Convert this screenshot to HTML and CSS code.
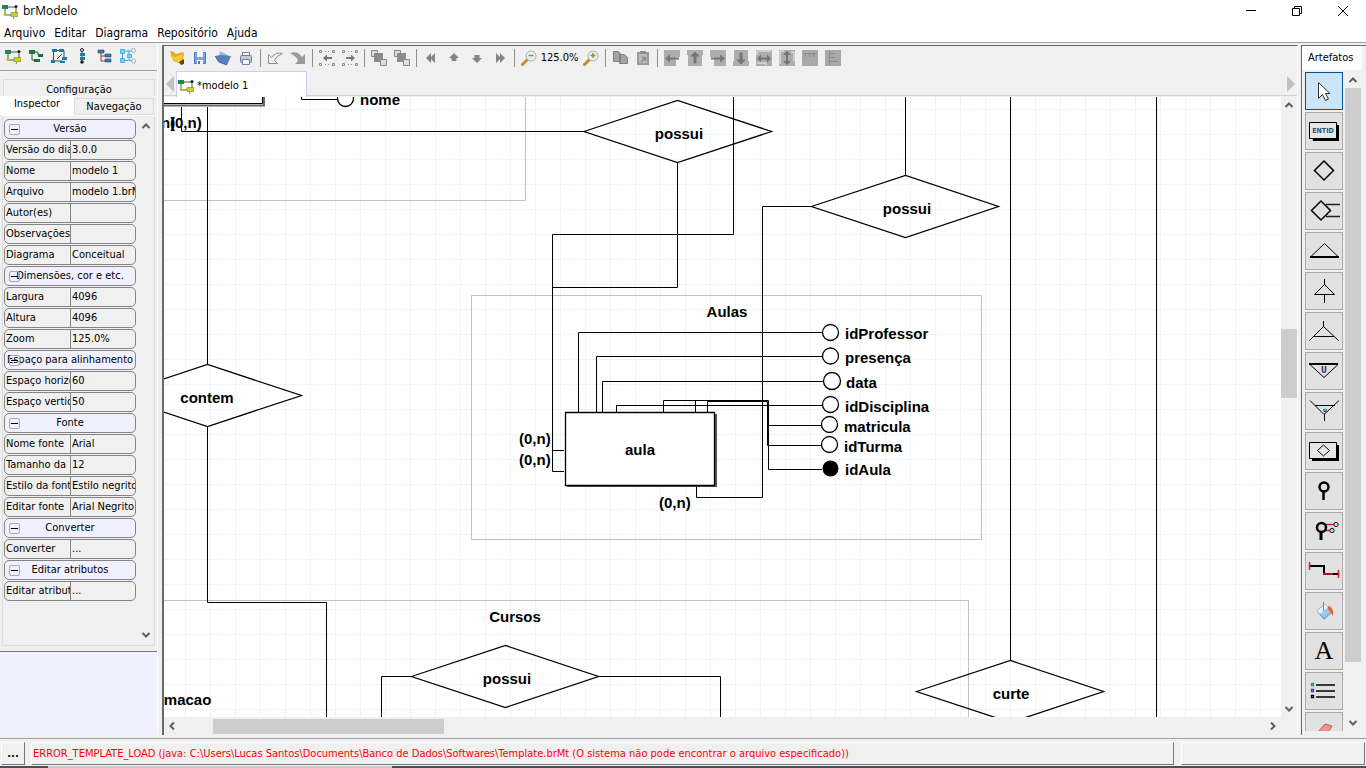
FILE: index.html
```html
<!DOCTYPE html>
<html lang="pt-BR">
<head>
<meta charset="utf-8">
<title>brModelo</title>
<link rel="stylesheet" href="styles.css">
</head>
<body>
<svg class="defs" aria-hidden="true">
  <symbol id="logo" viewBox="0 0 16 16"><path d="M4 4h10v8M3 5v7h9" fill="none" stroke="#555"/><path d="M0 2h6v4H0z" fill="#1c8a4c"/><circle cx="14" cy="3.500" r="1.500" fill="#222"/><circle cx="3" cy="11.500" r="1.500" fill="#b5c800"/><path d="M9 9.500h7v4H9z" fill="#c3d51a" stroke="#7e8c1a" stroke-width=".6"/><path d="M12 14l-1 2" stroke="#777"/></symbol>
  <symbol id="up" viewBox="0 0 16 16"><path d="M4.500 10L8 6.500 11.500 10" fill="none" stroke="#606060" stroke-width="2"/></symbol>
  <symbol id="down" viewBox="0 0 16 16"><path d="M4.500 6L8 9.500 11.500 6" fill="none" stroke="#606060" stroke-width="2"/></symbol>
  <symbol id="left" viewBox="0 0 16 16"><path d="M10 4.500L6.500 8 10 11.500" fill="none" stroke="#606060" stroke-width="2"/></symbol>
  <symbol id="right" viewBox="0 0 16 16"><path d="M6 4.500L9.500 8 6 11.500" fill="none" stroke="#606060" stroke-width="2"/></symbol>
  <symbol id="lens" viewBox="0 0 16 16"><path d="M6.500 9.500L1.500 14.500" stroke="#c98a2b" stroke-width="3" stroke-linecap="round"/><circle cx="10" cy="6" r="5" fill="#e4f2f4" stroke="#a3b4b0"/><path d="M7.500 5.500h5" stroke="#a58a20" stroke-width="1.500"/></symbol>
  <symbol id="nodes" viewBox="0 0 16 16"><g fill="none" stroke="#8a8a8a"><path d="M.5.500h2v2h-2zM13.500.500h2v2h-2zM.5 13.500h2v2h-2zM13.500 13.500h2v2h-2zM6 1.500h1M9 1.500h1M6 14.500h1M9 14.500h1"/></g></symbol>
  <symbol id="stack" viewBox="0 0 16 16"><path d="M.5.500h6v6h-6z" fill="#ddd" stroke="#888"/><path d="M3 3h9v9H3z" fill="#8c8c8c"/><path d="M9.500 9.500h6v6h-6z" fill="#ddd" stroke="#888"/></symbol>
</svg>

<header class="titlebar">
  <svg class="app-icon"><use href="#logo"/></svg>
  <h1 class="app-name">brModelo</h1>
  <button class="win" aria-label="Minimizar"><svg viewBox="0 0 12 12"><path d="M1 5.500h10" stroke="#000"/></svg></button>
  <button class="win" aria-label="Restaurar"><svg viewBox="0 0 12 12"><path d="M1.500 3.500h7v7h-7zM3.500 3V1.500h7v7H9" fill="none" stroke="#000"/></svg></button>
  <button class="win" aria-label="Fechar"><svg viewBox="0 0 12 12"><path d="M1 1l10 10M11 1L1 11" stroke="#000"/></svg></button>
</header>
<nav class="menubar">
  <button>Arquivo</button><button>Editar</button><button>Diagrama</button><button>Repositório</button><button>Ajuda</button>
</nav>

<main class="workspace">
  <aside class="side">
    <div class="models">
      <button class="tool" aria-label="Conceitual"><svg><use href="#logo"/></svg></button>
      <button class="tool" aria-label="Lógico"><svg viewBox="0 0 16 16"><path d="M5 4h5v3h3M4 5v7h4" fill="none" stroke="#444"/><path d="M1 2h6v4H1zM10 6h5v3h-5zM6 11h6v3H6z" fill="#147a3c"/></svg></button>
      <button class="tool" aria-label="Fluxo"><svg viewBox="0 0 16 16"><path d="M3 2.500h10v7M2.500 3v10h9M6 11l5-5" fill="none" stroke="#444"/><path d="M1 1h5v3H1zM8 1h5v3H8zM11 9h5v3h-5zM0 12h4v3H0zM9 13h5v2H9z" fill="#1d7da8"/></svg></button>
      <button class="tool" aria-label="Atividade"><svg viewBox="0 0 16 16"><path d="M8 3v11" stroke="#444"/><circle cx="8" cy="2" r="1.500" fill="#fff" stroke="#111"/><path d="M6 5h5v3H6zM6 9h5v3H6z" fill="#1d7da8"/><circle cx="8" cy="14" r="1.800" fill="#222"/></svg></button>
      <button class="tool" aria-label="EAP"><svg viewBox="0 0 16 16"><path d="M4 4v9h4M4 8h4" fill="none" stroke="#a33"/><path d="M1 2h6v3H1zM8 6h6v3H8zM8 11h6v3H8z" fill="#2a84ad" stroke="#345" stroke-width=".6"/></svg></button>
      <button class="tool" aria-label="Livre"><svg viewBox="0 0 16 16"><path d="M4 3h5v9.500h3M4 12.500h4M9 3h3M2.500 5v6" fill="none" stroke="#39a1d6"/><path d="M.5 1.500h4v4h-4zM.5 10.500h4v4h-4zM7.500 6.500h4v3h-4z" fill="#7fd0f2" stroke="#49b2e0"/><circle cx="13.500" cy="2.500" r="2" fill="#fff" stroke="#9ab"/><circle cx="13.500" cy="13" r="2" fill="#fff" stroke="#9ab"/></svg></button>
    </div>
    <div class="tabs">
      <button class="tab tab-config">Configuração</button>
      <button class="tab tab-on">Inspector</button>
      <button class="tab tab-nav">Navegação</button>
    </div>
    <div class="inspector">
      <form class="props">
        <button type="button" class="group"><i></i>Versão</button>
        <div class="prop"><label for="p1">Versão do diagrama</label><input id="p1" value="3.0.0"></div>
        <div class="prop"><label for="p2">Nome</label><input id="p2" value="modelo 1"></div>
        <div class="prop"><label for="p3">Arquivo</label><input id="p3" value="modelo 1.brM3"></div>
        <div class="prop"><label for="p4">Autor(es)</label><input id="p4"></div>
        <div class="prop"><label for="p5">Observações</label><input id="p5"></div>
        <div class="prop"><label for="p6">Diagrama</label><input id="p6" value="Conceitual"></div>
        <button type="button" class="group"><i></i>Dimensões, cor e etc.</button>
        <div class="prop"><label for="p7">Largura</label><input id="p7" value="4096"></div>
        <div class="prop"><label for="p8">Altura</label><input id="p8" value="4096"></div>
        <div class="prop"><label for="p9">Zoom</label><input id="p9" value="125.0%"></div>
        <button type="button" class="group"><i></i>Espaço para alinhamento</button>
        <div class="prop"><label for="p10">Espaço horizontal</label><input id="p10" value="60"></div>
        <div class="prop"><label for="p11">Espaço vertical</label><input id="p11" value="50"></div>
        <button type="button" class="group"><i></i>Fonte</button>
        <div class="prop"><label for="p12">Nome fonte</label><input id="p12" value="Arial"></div>
        <div class="prop"><label for="p13">Tamanho da</label><input id="p13" value="12"></div>
        <div class="prop"><label for="p14">Estilo da fonte</label><input id="p14" value="Estilo negrito"></div>
        <div class="prop"><label for="p15">Editar fonte</label><input id="p15" value="Arial Negrito"></div>
        <button type="button" class="group"><i></i>Converter</button>
        <div class="prop"><label for="p16">Converter</label><input id="p16" value="..."></div>
        <button type="button" class="group"><i></i>Editar atributos</button>
        <div class="prop"><label for="p17">Editar atributos</label><input id="p17" value="..."></div>
      </form>
      <div class="scroll scroll-y"><button aria-label="Subir"><svg><use href="#up"/></svg></button><span class="grow"></span><button aria-label="Descer"><svg><use href="#down"/></svg></button></div>
    </div>
    <div class="hint"></div>
  </aside>

  <section class="editor">
    <div class="toolbar">
      <button class="tool" aria-label="Abrir"><svg viewBox="0 0 16 16"><path d="M1 1l4 1 2 2 7-2 1 2-2 10-9-3z" fill="#e9a91f"/><path d="M1 5l5 2 8-3-2 9-8-3z" fill="#f8c941"/><path d="M10 12l5-3v5l-3 1z" fill="#5d4720"/></svg></button>
      <button class="tool" aria-label="Salvar"><svg viewBox="0 0 16 16"><path d="M2.500 2.500h11v11h-11z" fill="#7ba2df" stroke="#4d7ac6"/><path d="M5 2h6v5H5zM5 10h6v4H5z" fill="#f5f8ff"/><path d="M6 11h2v3H6z" fill="#5577b0"/></svg></button>
      <button class="tool" aria-label="Fechar modelo"><svg viewBox="0 0 16 16"><path d="M5 1l8 4-2 8-8-3z" fill="#a8b9cf"/><path d="M0 6l6-1 10 1-4 9-8-3z" fill="#577fb8"/><path d="M0 6l4 6 8 3" fill="none" stroke="#3d659f"/></svg></button>
      <button class="tool" aria-label="Imprimir"><svg viewBox="0 0 16 16"><path d="M4.500 6V2.500h7V6" fill="#f4f7fb" stroke="#7b8591"/><rect x="2.500" y="5.500" width="11" height="7" rx="1" fill="#c2cad5" stroke="#727b88"/><path d="M4.500 9.500h7v5h-7z" fill="#f5f8fc" stroke="#6b83b0"/></svg></button>
      <span class="sep"></span>
      <button class="tool" aria-label="Desfazer"><svg viewBox="0 0 16 16"><path d="M1.500 4.500v9h9L7.500 10.500Q9 6 15.500 3.500 9 1.500 4.500 7.500z" fill="#eee" stroke="#8d8d8d"/></svg></button>
      <button class="tool" aria-label="Refazer"><svg viewBox="0 0 16 16"><path d="M15 4v10H5l3-3Q7 6 0 3.500 7 0 12 7z" fill="#9a9a9a"/></svg></button>
      <span class="sep"></span>
      <button class="tool" aria-label="Anterior"><svg><use href="#nodes"/><path d="M4 8l4-3.500v2.500h5v2H8v2.500z" fill="#777"/></svg></button>
      <button class="tool" aria-label="Próximo"><svg><use href="#nodes"/><path d="M13 8L9 4.500v2.500H4v2h5v2.500z" fill="#777"/></svg></button>
      <span class="sep"></span>
      <button class="tool" aria-label="Para frente"><svg><use href="#stack"/></svg></button>
      <button class="tool" aria-label="Para trás"><svg><use href="#stack"/></svg></button>
      <span class="sep"></span>
      <button class="tool" aria-label="Mover à esquerda"><svg viewBox="0 0 16 16"><path d="M3 8l5-5v10zM7 8l5-5v10z" fill="#858585"/></svg></button>
      <button class="tool" aria-label="Mover acima"><svg viewBox="0 0 16 16"><path d="M8 3l5 5h-2.500v3h-5V8H3z" fill="#858585"/></svg></button>
      <button class="tool" aria-label="Mover abaixo"><svg viewBox="0 0 16 16"><path d="M8 13l5-5h-2.500V5h-5v3H3z" fill="#858585"/></svg></button>
      <button class="tool" aria-label="Mover à direita"><svg viewBox="0 0 16 16"><path d="M9 8L4 3v10zM13 8L8 3v10z" fill="#858585"/></svg></button>
      <span class="sep"></span>
      <button class="tool" aria-label="Reduzir"><svg><use href="#lens"/></svg></button>
      <output class="zoom">125.0%</output>
      <button class="tool" aria-label="Ampliar"><svg><use href="#lens"/><path d="M10 3v5" stroke="#a58a20" stroke-width="1.500"/></svg></button>
      <span class="sep"></span>
      <button class="tool" aria-label="Copiar"><svg viewBox="0 0 16 16"><path d="M1.500 1.500h5l2 2v8h-7zM7.500 4.500h5l3 3v6h-8z" fill="#a4a4a4" stroke="#808080"/></svg></button>
      <button class="tool" aria-label="Colar"><svg viewBox="0 0 16 16"><path d="M3 3h10v11H3z" fill="#bbb" stroke="#9a9a9a" stroke-width="2"/><path d="M5 1h6v3H5z" fill="#8e8e8e"/><path d="M6 12l4-4M7 7.500h3.500V11" fill="none" stroke="#888" stroke-width="1.500"/></svg></button>
      <span class="sep"></span>
      <button class="tool" aria-label="Alinhar à esquerda"><svg viewBox="0 0 16 16"><path d="M0 0h16v7H0zM0 6h12v10H0z" fill="#adadad"/><path d="M1 8.500l5-4v3h9v2H6v3z" fill="#777"/></svg></button>
      <button class="tool" aria-label="Alinhar acima"><svg viewBox="0 0 16 16"><path d="M0 0h16v5H0zM1 5h14v11H1z" fill="#adadad"/><path d="M8 2l4 4H9v7H7V6H4z" fill="#777" stroke="#777"/></svg></button>
      <button class="tool" aria-label="Alinhar à direita"><svg viewBox="0 0 16 16"><path d="M0 0h16v7H0zM4 6h12v10H4z" fill="#adadad"/><path d="M15 8.500l-5-4v3H1v2h9v3z" fill="#777"/></svg></button>
      <button class="tool" aria-label="Alinhar abaixo"><svg viewBox="0 0 16 16"><path d="M1 0h14v11H1zM0 11h16v5H0z" fill="#adadad"/><path d="M8 14l4-4H9V3H7v7H4z" fill="#777" stroke="#777"/></svg></button>
      <button class="tool" aria-label="Mesma largura"><svg viewBox="0 0 16 16"><path d="M0 0h16v16H0z" fill="#adadad"/><path d="M1 5V1h14M1 13h9v2" fill="none" stroke="#eee"/><path d="M1 8.500l4-4v3h6v-3l4 4-4 4v-3H5v3z" fill="#747474"/></svg></button>
      <button class="tool" aria-label="Mesma altura"><svg viewBox="0 0 16 16"><path d="M0 0h16v16H0z" fill="#adadad"/><path d="M1 14V1h4M12 2h3v9" fill="none" stroke="#eee"/><path d="M8 1l4 4H9v6h3l-4 4-4-4h3V5H4z" fill="#747474"/></svg></button>
      <button class="tool" aria-label="Régua horizontal"><svg viewBox="0 0 16 16"><path d="M0 0h16v16H0z" fill="#a8a8a8"/><path d="M1 3.500h14M3.500 4v3M7.500 4v3M11.500 4v3" stroke="#8b8b8b"/></svg></button>
      <button class="tool" aria-label="Régua vertical"><svg viewBox="0 0 16 16"><path d="M0 0h16v16H0z" fill="#a8a8a8"/><path d="M4.500 1v14M5 3.500h5M5 7.500h5M5 11.500h8" stroke="#8b8b8b"/></svg></button>
    </div>
    <div class="docs">
      <button class="doc-nav" aria-label="Anterior"><svg viewBox="0 0 8 16"><path d="M8 0v16L0 8z" fill="#c0c0c0"/></svg></button>
      <button class="doc"><svg><use href="#logo"/></svg>*modelo 1</button>
      <span class="doc-rest"></span>
      <button class="doc-nav" aria-label="Próxima"><svg viewBox="0 0 8 16"><path d="M0 0v16l8-8z" fill="#c0c0c0"/></svg></button>
    </div>
    <div class="stage">
      <svg class="canvas">
        <defs><pattern id="grid" width="25" height="25" patternUnits="userSpaceOnUse" x="210" y="109"><path d="M.5 0v25M0 .5h25" stroke="#edf5fa"/></pattern></defs>
        <g transform="translate(-164 -97)">
          <rect x="164" y="97" width="4096" height="4096" fill="url(#grid)"/>
          <g class="frame"><path d="M525.500 90v110.500H150"/><path d="M471.500 295.500h510v244h-510z"/><path d="M150 600.500h818.500V900"/></g>
          <path d="M150 105.500h114V90" fill="none" stroke="#666" stroke-width="2"/>
          <g class="wire">
            <path d="M150 103.500h112.500V90M181.500 107v24.500H584M207.500 107v257.500M301.500 90v9.500H337"/>
            <path d="M677.500 162.500v125H552.500M733.500 90v144.500H552.500v237H564M552.500 450.500H564"/>
            <path d="M905.500 90v86M811 206.500h-48.500v291h-66V487M1010.500 90v570M1156.500 90v700"/>
            <path d="M207.500 426.500v176h119V790M411 676.500h-29.500V790M599 676.500h121.500V790"/>
            <path d="M578.500 412v-79.500H822M596.500 412v-55.500H822M602.500 412v-30.500H823M616.500 412v-6.500H822"/>
            <path d="M663.500 412v-11.500h105v25H821M695.500 412v-11.500M707.500 412v-10.500h60v44H821M768.500 425v44.500H822"/>
          </g>
          <g class="diamond">
            <path d="M584 131.500L677.500 100.500 771.500 131.500 677.500 162.500z"/>
            <path d="M811.500 206.500L905.500 175.500 998.500 206.500 905.500 237.500z"/>
            <path d="M114 395.500L207.500 364.500 301.500 395.500 207.500 426.500z"/>
            <path d="M411.500 676.500L505.500 645.500 598.500 676.500 505.500 707.500z"/>
            <path d="M916.500 691.500L1010.500 660.500 1103.500 691.500 1010.500 722.500z"/>
          </g>
          <path d="M567 414h150v73H567z" fill="#555"/>
          <path class="shape" d="M565.500 412.500h149v73h-149z"/>
          <g class="shape"><circle cx="345.500" cy="98.500" r="8"/><circle cx="830.500" cy="332.500" r="8"/><circle cx="830.500" cy="356" r="8"/><circle cx="832" cy="381" r="8.500"/><circle cx="830.500" cy="404.500" r="8"/><circle cx="829.500" cy="424.500" r="8"/><circle cx="829.500" cy="444.500" r="8"/></g>
          <circle cx="830.500" cy="468.500" r="8"/>
          <g class="label">
            <text x="360" y="105">nome</text><text x="161" y="128">n)</text><text x="170" y="128">(0,n)</text>
            <text x="845" y="339">idProfessor</text><text x="845" y="363">presença</text><text x="846" y="388">data</text><text x="845" y="412">idDisciplina</text><text x="844" y="432">matricula</text><text x="844" y="452">idTurma</text><text x="845" y="475">idAula</text>
            <text x="519" y="444">(0,n)</text><text x="519" y="465">(0,n)</text><text x="659" y="508">(0,n)</text>
            <text x="158" y="705">rmacao</text>
          </g>
          <g class="label mid">
            <text x="679" y="139">possui</text><text x="907" y="214">possui</text><text x="207" y="403">contem</text><text x="727" y="317">Aulas</text><text x="640" y="455">aula</text><text x="515" y="622">Cursos</text><text x="507" y="684">possui</text><text x="1011" y="699">curte</text>
          </g>
        </g>
      </svg>
      <div class="scroll scroll-y"><button aria-label="Subir"><svg><use href="#up"/></svg></button><span class="stage-before"></span><span class="thumb stage-thumb"></span><span class="stage-after"></span><button aria-label="Descer"><svg><use href="#down"/></svg></button></div>
      <div class="scroll scroll-x"><button aria-label="Esquerda"><svg><use href="#left"/></svg></button><span class="row-before"></span><span class="thumb row-thumb"></span><span class="row-after"></span><button aria-label="Direita"><svg><use href="#right"/></svg></button></div>
    </div>
  </section>

  <aside class="palette">
    <h2 class="palette-title">Artefatos</h2>
    <div class="palette-body">
      <div class="items">
        <button class="item item-on" aria-label="Selecionar"><svg viewBox="0 0 32 32"><path d="M10.500 7.500v16l4-4 3 6 3-1.500-3-5.500h4.500z" fill="#fff" stroke="#333"/></svg></button>
        <button class="item" aria-label="Entidade"><svg viewBox="0 0 32 32"><path d="M3 10h28v16H5z"/><path d="M1.500 7.500h27v16h-27z" fill="#e6e6e6" stroke="#000"/><text class="entid" x="15" y="18">ENTID</text></svg></button>
        <button class="item" aria-label="Relacionamento"><svg viewBox="0 0 32 32"><path d="M16 6l9.500 9.500L16 25l-9.500-9.500z" fill="none" stroke="#000" stroke-width="1.500"/></svg></button>
        <button class="item" aria-label="Entidade associativa"><svg viewBox="0 0 32 32"><path d="M13 6l9.500 9.500L13 25l-9.500-9.500z" fill="none" stroke="#000" stroke-width="1.500"/><path d="M18 9.500h14M18 21.500h14" stroke="#222" stroke-width="1.500"/></svg></button>
        <button class="item" aria-label="Especialização"><svg viewBox="0 0 32 32"><path d="M3 21.500L16.500 8.500 30 21.500z" fill="none" stroke="#000"/><path d="M2 22h29" stroke="#000" stroke-width="2"/></svg></button>
        <button class="item" aria-label="Especialização exclusiva"><svg viewBox="0 0 32 32"><path d="M6.500 19.500l10-10 10 10zM16.500 4v6M16.500 20v8" fill="none" stroke="#000"/></svg></button>
        <button class="item" aria-label="Especialização não exclusiva"><svg viewBox="0 0 32 32"><path d="M1.500 25.500l14-14 15 14M6 21.500h20M15.500 6v6" fill="none" stroke="#000"/></svg></button>
        <button class="item" aria-label="União"><svg viewBox="0 0 32 32"><path d="M2 9.500h28L16 22.500z" fill="none" stroke="#000"/><path d="M1 9h29" stroke="#000" stroke-width="2"/><text class="union" x="16" y="18">U</text></svg></button>
        <button class="item" aria-label="União múltipla"><svg viewBox="0 0 32 32"><path d="M2 5.500l14 14 15-14M7 10.500h20M16.500 19v7" fill="none" stroke="#000"/><text class="union small" x="17" y="17">u</text></svg></button>
        <button class="item" aria-label="Associativa"><svg viewBox="0 0 32 32"><path d="M4 10h27v16H4z"/><path d="M1.500 7.500h27v16h-27z" fill="#e6e6e6" stroke="#000"/><path d="M15.500 10l6 5.500-6 5.500-6-5.500z" fill="none" stroke="#000"/></svg></button>
        <button class="item" aria-label="Atributo"><svg viewBox="0 0 32 32"><circle cx="16" cy="12" r="4.500" fill="none" stroke="#000" stroke-width="2.500"/><path d="M15.500 16v9" stroke="#000" stroke-width="2.500"/></svg></button>
        <button class="item" aria-label="Atributo composto"><svg viewBox="0 0 32 32"><path d="M17 9.500h10M18 15.500h6" stroke="#e31b23" stroke-width="1.500"/><circle cx="13.500" cy="12.500" r="4.500" fill="#ddd" stroke="#000" stroke-width="2.500"/><path d="M13 17v8" stroke="#000" stroke-width="3"/><circle cx="28" cy="9.500" r="2.200" fill="#ccc" stroke="#222"/><circle cx="24" cy="15.500" r="2.200" fill="#ccc" stroke="#222"/></svg></button>
        <button class="item" aria-label="Ligação"><svg viewBox="0 0 32 32"><path d="M2 11h14v8h14" fill="none" stroke="#000" stroke-width="2"/><path d="M1.500 7v8M30.500 15v8M15 19h10" stroke="#e31b23" stroke-width="1.500"/></svg></button>
        <button class="item" aria-label="Cor"><svg viewBox="0 0 32 32"><path d="M9 16l8-7 7 8-8 7z" fill="#9fc8ec" stroke="#5588b5"/><path d="M9 16l8-7 3 3-8 7z" fill="#e4f1fb"/><path d="M15.500 7v9" stroke="#888"/><path d="M20 11q6 1 5 10l-2-3-3-4z" fill="#e4602c"/></svg></button>
        <button class="item letter" aria-label="Texto">A</button>
        <button class="item" aria-label="Legenda"><svg viewBox="0 0 32 32"><path d="M8 10h19M8 16h19M8 22h19" stroke="#000" stroke-width="1.500"/><g fill="#fff" stroke-width="1.300"><path d="M3.500 8.500h2v2h-2z" stroke="#2a9d4e"/><path d="M3.500 14.500h2v2h-2z" stroke="#3b3fb0"/><path d="M3.500 20.500h2v2h-2z" stroke="#000"/></g></svg></button>
        <button class="item" aria-label="Apagar"><svg viewBox="0 0 32 32"><path d="M9 18l8-9 7 2-7 11z" fill="#f2918d" stroke="#b96562"/></svg></button>
      </div>
      <div class="scroll scroll-y"><button aria-label="Subir"><svg><use href="#up"/></svg></button><span class="thumb list-thumb"></span><span class="list-after"></span><button aria-label="Descer"><svg><use href="#down"/></svg></button></div>
    </div>
  </aside>
</main>

<footer class="status">
  <button class="more" aria-label="Mais">...</button>
  <p class="message">ERROR_TEMPLATE_LOAD (java: C:\Users\Lucas Santos\Documents\Banco de Dados\Softwares\Template.brMt (O sistema não pode encontrar o arquivo especificado))</p>
  <p class="info"></p>
</footer>
<div class="edge"></div>
</body>
</html>
```
FILE: styles.css
```css
* { box-sizing: border-box; }
body {
  margin: 0;
  height: 100vh;
  display: flex;
  flex-direction: column;
  overflow: hidden;
  background: #f0f0f0;
  color: #000;
  font: 11px/14px "DejaVu Sans Condensed", "DejaVu Sans", sans-serif;
}
button, input { font: inherit; color: inherit; margin: 0; padding: 0; border: 0; background: none; border-radius: 0; }
h1, h2, p { margin: 0; font-weight: normal; }
svg { display: block; flex: none; }
.defs { position: absolute; width: 0; height: 0; }

.titlebar { display: flex; align-items: center; height: 22px; padding-left: 2px; background: #fff; }
.app-icon { width: 16px; height: 16px; margin-right: 5px; }
.app-name { flex: 1; font: 12px/22px "Open Sans", sans-serif; }
.win { width: 46px; height: 22px; display: grid; place-items: center; }
.win svg { width: 12px; height: 12px; }
.menubar { display: flex; gap: 9px; height: 20px; padding: 2px 0 0 4px; background: #fff; font-size: 12px; }

.workspace { flex: 1; min-height: 0; display: flex; border-top: 1px solid #a0a0a0; padding-bottom: 3px; }
.tool { flex: none; width: 23px; height: 22px; display: grid; place-items: center; }
.tool svg { width: 16px; height: 16px; }

.side { width: 158px; margin-right: 4px; flex: none; display: flex; flex-direction: column; border-right: 1px solid #fff; }
.models { display: flex; height: 28px; padding: 2px 1px; border-bottom: 1px solid #a0a0a0; }
.tabs { display: flex; flex-wrap: wrap; padding-top: 8px; align-items: flex-end; }
.tab { height: 17px; border: 1px solid #dcdcdc; border-bottom: 0; }
.tab-config { width: 152px; margin-left: 3px; padding-top: 3px; }
.tab-on { width: 74px; height: 19px; padding-bottom: 3px; background: #fff; border: 0; }
.tab-nav { width: 80px; border-bottom: 1px solid #dcdcdc; }
.inspector { flex: 1; min-height: 0; display: flex; margin: 0 2px 5px; padding: 2px 0 2px; border: 1px solid #dcdcdc; border-top-color: #fff; overflow: hidden; }
.props { flex: 1; display: flex; flex-direction: column; gap: 1px; padding: 1px 2px 0 1px; min-width: 0; }
.group, .prop { position: relative; flex: none; height: 20px; border: 1px solid #848484; border-radius: 5px; }
.group { background: #f0f0ff; white-space: nowrap; text-align: center; }
.group i { position: absolute; left: 4px; top: 4px; width: 11px; height: 11px; border: 1px solid #aaa; border-radius: 2px; }
.group i::after { content: ""; display: block; height: 1px; margin: 4px 1px; background: #000; }
.prop { display: flex; line-height: 18px; overflow: hidden; }
.prop label { width: 66px; flex: none; padding-left: 1px; overflow: hidden; white-space: nowrap; border-right: 1px solid #848484; }
.prop input { flex: 1; min-width: 0; padding-left: 1px; }
.hint { height: 84px; flex: none; background: #f0f0ff; border-top: 1px solid #777; }

.scroll { display: flex; background: #f0f0f0; }
.scroll-y { flex: none; width: 16px; flex-direction: column; }
.scroll button, .scroll svg { width: 16px; height: 16px; }
.grow { flex: 1; }
.thumb { background: #cdcdcd; }

.editor { flex: 1; min-width: 0; display: flex; flex-direction: column; margin-top: 2px; border-left: 2px solid #696969; border-top: 1px solid #696969; border-right: 1px solid #fff; }
.toolbar { display: flex; align-items: center; height: 25px; padding: 0 0 2px 1px; }
.sep { width: 6px; height: 18px; background: linear-gradient(#909090, #909090) 3px 0 / 1px 100% no-repeat; }
.zoom { width: 39px; text-align: center; white-space: nowrap; }
.docs { display: flex; height: 26px; align-items: stretch; background: linear-gradient(#ccccff, #ccccff) 0 24px / 100% 1px no-repeat; }
.doc-nav { width: 12px; display: grid; place-items: center; }
.doc-nav svg { width: 8px; height: 16px; }
.doc { display: flex; align-items: center; gap: 3px; width: 131px; padding: 3px 0 0 1px; border: 1px solid #ccccff; border-bottom: 0; background: #fff; }
.doc svg { width: 16px; height: 16px; }
.doc-rest { flex: 1; }
.stage { flex: 1; min-height: 0; display: grid; grid-template: minmax(0, 1fr) 18px / minmax(0, 1fr) 16px; }
.canvas { width: 100%; height: 100%; background: #fff; overflow: hidden; }
.scroll-x { align-items: center; }
.scroll-x .thumb { height: 15px; }
.stage-before { flex: 216; }
.stage-thumb { flex: 69; }
.stage-after { flex: 303; }
.row-before { flex: 33; }
.row-thumb { flex: 231; }
.row-after { flex: 820; }

.frame { fill: none; stroke: #c0c0c0; }
.wire { fill: none; stroke: #000; }
.diamond { fill: none; stroke: #000; stroke-width: 1.300; }
.shape { fill: #fff; stroke: #000; stroke-width: 1.300; }
.label { font: bold 15px "Liberation Sans", Arial, sans-serif; }
.mid { text-anchor: middle; }

.palette { width: 65px; flex: none; margin: 2px 0 0 3px; display: flex; flex-direction: column; border-left: 1px solid #696969; border-top: 1px solid #696969; }
.palette-title { height: 24px; margin-right: 4px; padding-left: 6px; font-size: 11px; line-height: 23px; background: #fff; }
.palette-body { flex: 1; min-height: 0; display: flex; gap: 2px; padding: 2px 0 4px 3px; }
.items { width: 38px; display: flex; flex-direction: column; gap: 2px; overflow: hidden; }
.item { flex: none; width: 38px; height: 38px; display: grid; place-items: center; background: #e1e1e1; border: 1px solid #adadad; }
.item-on { background: #cce4f7; border-color: #00549a; }
.item svg { width: 32px; height: 32px; }
.entid { font: bold 7px "DejaVu Sans Condensed", sans-serif; text-anchor: middle; fill: #27547f; }
.union { font: bold 8px "DejaVu Sans Condensed", sans-serif; text-anchor: middle; fill: #17365c; }
.small { font-size: 6px; }
.item.letter { font: 26px/34px "Liberation Serif", serif; }
.list-thumb { flex: 573; }
.list-after { flex: 53; }

.status { flex: none; display: flex; height: 28px; padding: 3px 1px 1px 1px; border-top: 1px solid #a0a0a0; }
.more, .message, .info { border: 1px solid #fff; border-right-color: #777; border-bottom-color: #777; }
.more { width: 24px; margin-right: 6px; font-weight: bold; }
.message { flex: 1144; padding-left: 1px; line-height: 22px; color: #f00; white-space: nowrap; overflow: hidden; }
.info { flex: 183; margin-left: 7px; }
.edge { flex: none; height: 2px; background: linear-gradient(90deg, #46525a 48px, #c8c8c8 48px 392px, #46525a 392px); }
```
